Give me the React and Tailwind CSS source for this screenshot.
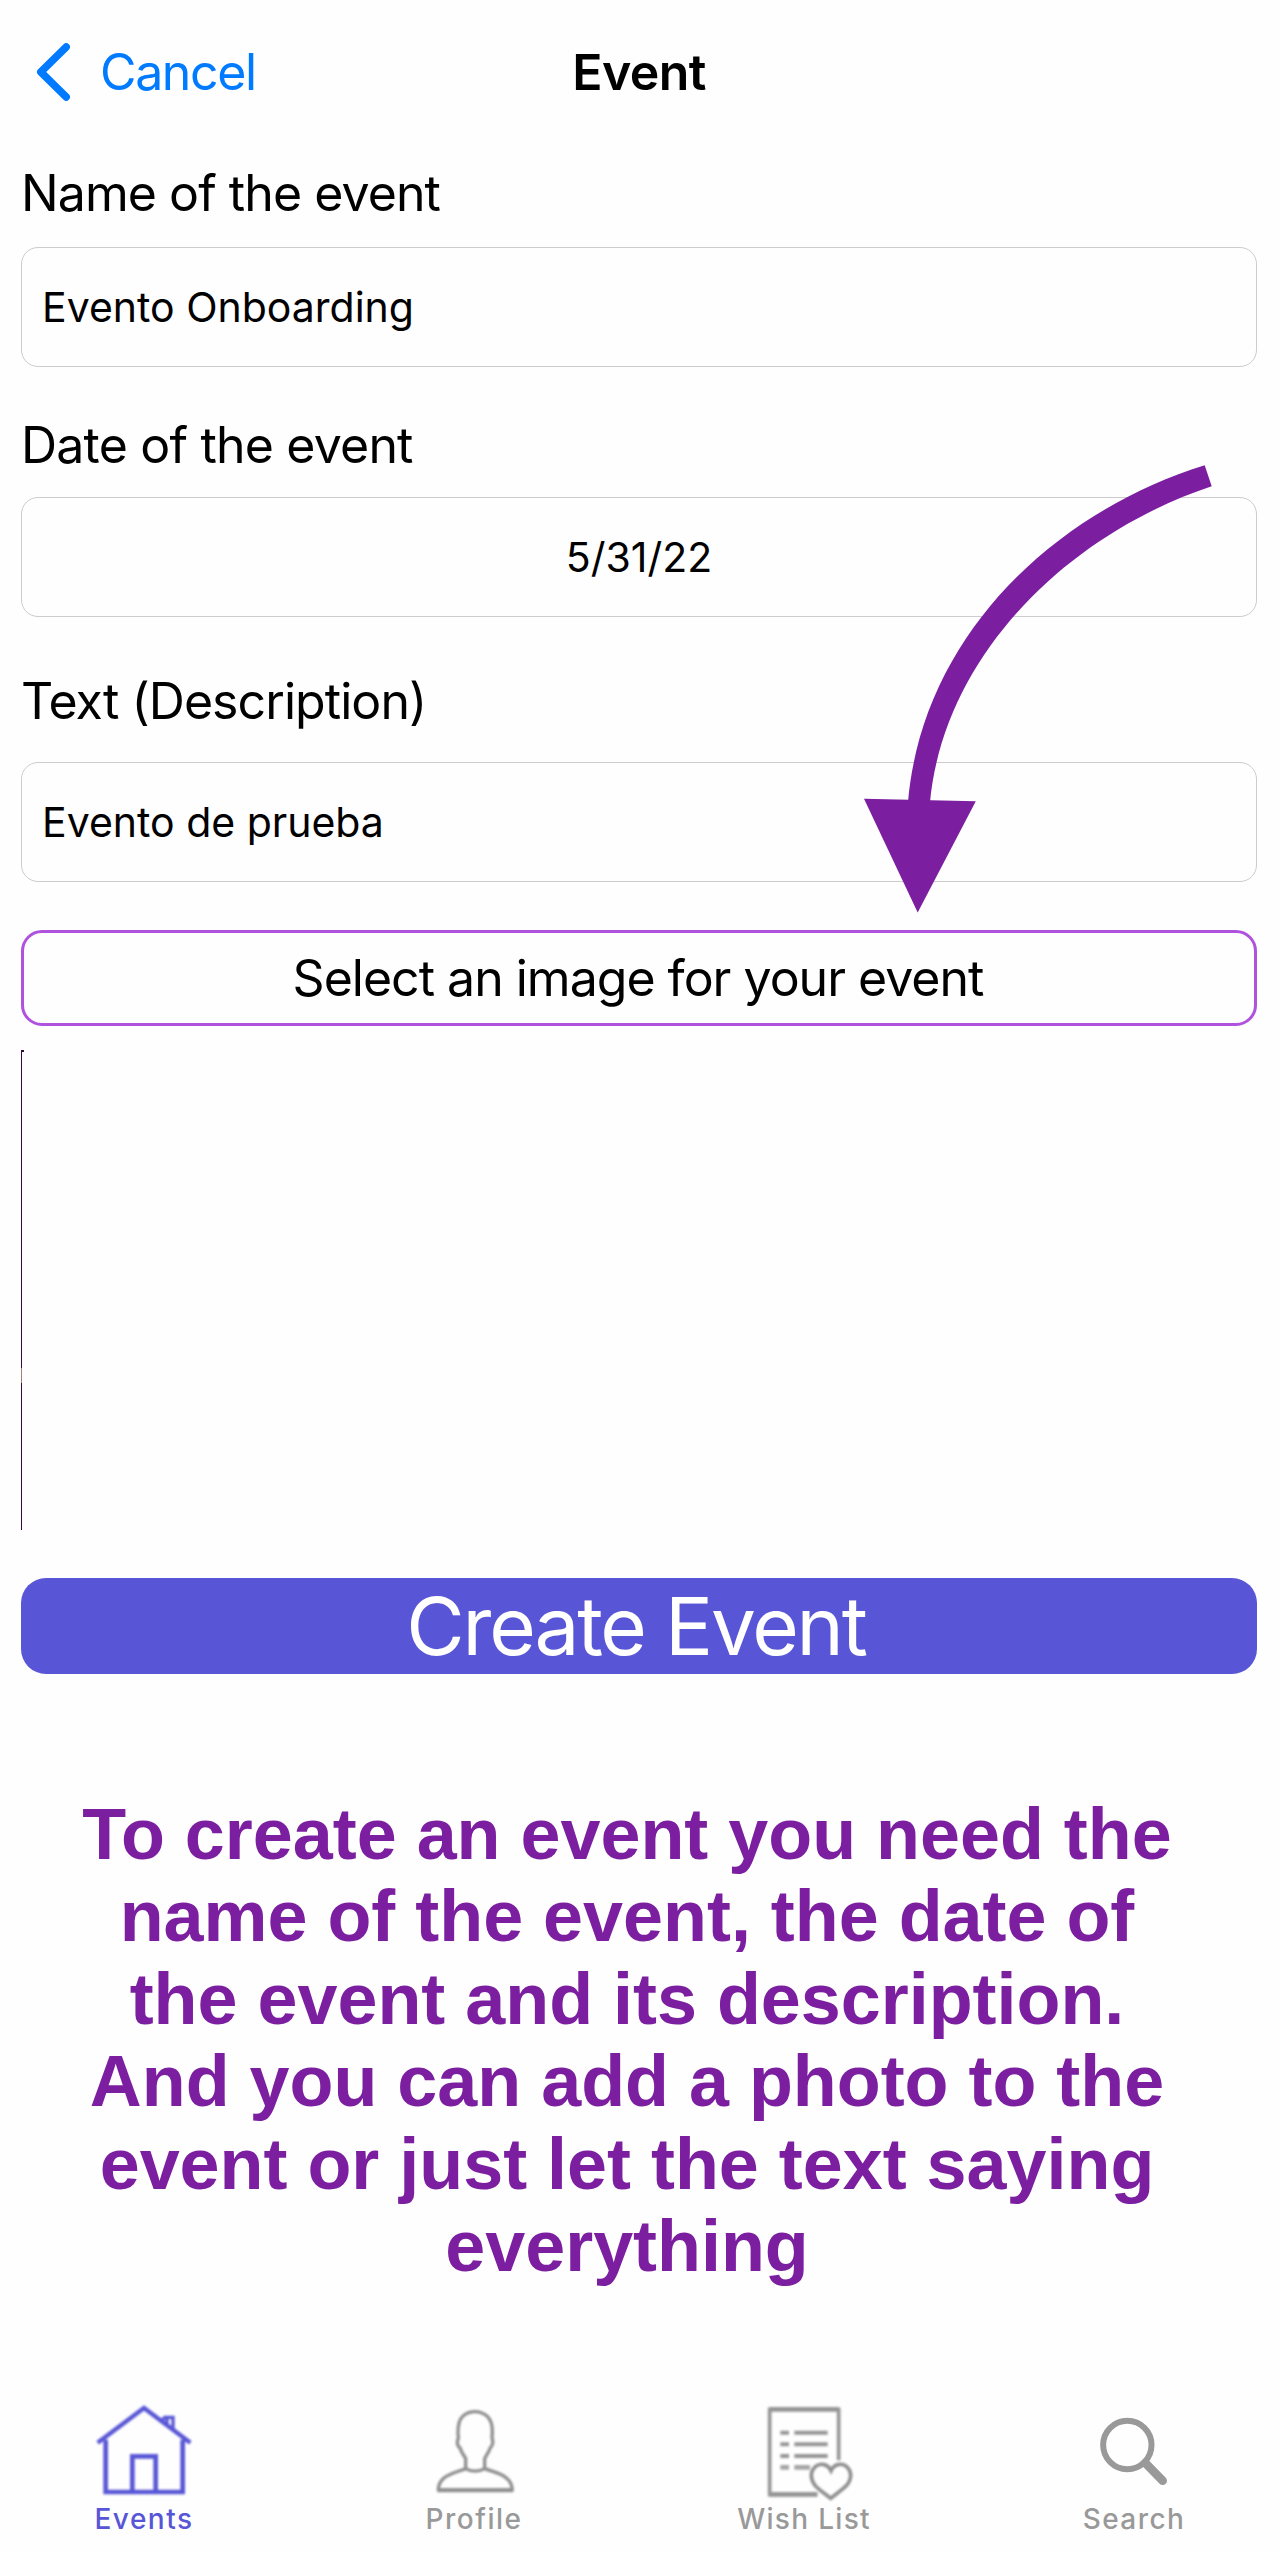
function HouseIcon() {
  return (
    <svg viewBox="12 24 360 312" className="h-[104px] w-[120px] blur-[0.9px]" fill="none" stroke="#5856d6" strokeWidth="14">
      <path d="M53 155 L192 51 L331 155" strokeWidth="13" />
      <path d="M77 146 V303 H308 V146" />
      <path d="M157 300 V196 H227 V300" />
      <path d="M244 90 L254 79 H279 V114 M261 84 V102" strokeWidth="10" />
    </svg>
  );
}

function PersonIcon() {
  return (
    <svg viewBox="42 24 360 312" className="h-[104px] w-[120px] blur-[0.9px]" fill="none" stroke="#8f8f8f" strokeWidth="10" strokeLinejoin="round">
      <path d="M197 233 V202 C191 192 183 184 180 170 C172 166 171 156 173 146 C177 143 175 138 174 128 C173 100 178 84 190 74 C200 66 211 62 225 62 C240 62 251 67 261 75 C273 86 278 100 277 126 C276 138 275 143 278 147 C279 158 277 166 271 170 C267 184 259 192 254 203 V233" />
      <path d="M197 233 C213 243 237 243 254 233 C280 243 304 246 320 262 C332 272 336 282 337 297 H115 C115 282 120 272 131 262 C148 247 172 243 197 233 Z" />
      <path d="M113 298 H339" strokeWidth="12" />
    </svg>
  );
}

function WishIcon() {
  return (
    <svg viewBox="72 24 360 312" className="h-[104px] w-[120px] blur-[0.9px]" fill="none" stroke="#969696" strokeWidth="11">
      <path d="M292 311 H149 V55 H356 V208" />
      <path d="M149 55 H356 M292 310 H149" strokeWidth="14" />
      <path d="M181 125 H207 M223 125 H323 M181 160 H207 M223 160 H323 M181 195 H207 M223 195 H323" strokeWidth="12" />
      <path d="M181 229 H207 M223 229 H270" strokeWidth="14" stroke="#a6a6a6" />
      <path d="M333 239 C324 220 302 214 287 226 C269 241 271 266 285 283 C296 296 320 312 332 322 C344 312 368 296 380 283 C395 266 397 241 379 226 C363 214 342 220 333 239 Z" stroke="#8f8f8f" />
    </svg>
  );
}

function SearchIcon() {
  return (
    <svg viewBox="42 24 360 312" className="h-[104px] w-[120px]" fill="none" stroke="#999999">
      <circle cx="202" cy="162" r="72.5" strokeWidth="18" />
      <path d="M256 216 L308 269" strokeWidth="26" strokeLinecap="round" />
    </svg>
  );
}

function Field({ label, value, className, labelClass, centered }) {
  return (
    <div className={className}>
      <div className={"text-[50px] leading-[60px] whitespace-nowrap " + labelClass}>{label}</div>
      <div
        className={
          "flex h-[120px] items-center rounded-[17px] border border-[#cccccc] text-[41px] leading-none " +
          (centered ? "justify-center" : "pl-[20px]")
        }
      >
        {value}
      </div>
    </div>
  );
}

const tips = [
  "To create an event you need the",
  "name of the event, the date of",
  "the event and its description.",
  "And you can add a photo to the",
  "event or just let the text saying",
  "everything",
];

const tabs = [
  { name: "Events", Icon: HouseIcon, style: "text-[#5856d6] tracking-[1.5px]" },
  { name: "Profile", Icon: PersonIcon, style: "text-[#999999] tracking-[1.5px]" },
  { name: "Wish List", Icon: WishIcon, style: "text-[#999999] tracking-[1.3px]" },
  { name: "Search", Icon: SearchIcon, style: "text-[#999999] tracking-[1.45px]" },
];

export default function App() {
  return (
    <div className="relative flex h-[2551px] w-[1281px] flex-col overflow-hidden bg-[#fefefe] font-['Inter',sans-serif] text-black">
      <header className="grid h-[144px] grid-cols-[1fr_auto_1fr] items-center text-[50px] leading-[60px]">
        <div className="flex items-center text-[#007aff]">
          <svg viewBox="0 0 40 64" className="ml-[34px] h-[64px] w-[40px]" fill="none" stroke="#007aff" strokeWidth="7.5" strokeLinecap="round" strokeLinejoin="round">
            <path d="M32.2 7 L6.8 32 L32.2 57" />
          </svg>
          <span className="ml-[26px] tracking-[-1.37px]">Cancel</span>
        </div>
        <h1 className="pr-[3px] font-semibold tracking-[-0.6px]">Event</h1>
        <div />
      </header>

      <main className="flex flex-col pr-[24px] pl-[21px]">
        <Field className="mt-[19px] flex flex-col gap-[24px]" label="Name of the event" labelClass="tracking-[-0.93px]" value="Evento Onboarding" />
        <Field className="mt-[48px] flex flex-col gap-[22px]" label="Date of the event" labelClass="tracking-[-0.8px]" value="5/31/22" centered />
        <Field className="mt-[54px] flex flex-col gap-[31px]" label="Text (Description)" labelClass="tracking-[-0.93px]" value="Evento de prueba" />

        <button className="mt-[48px] flex h-[96px] items-center justify-center rounded-[21px] border-[3px] border-[#af52de] pr-[2px] text-[50px] leading-[60px] tracking-[-1px]">
          Select an image for your event
        </button>

        <div className="mt-[24px] flex h-[480px] items-start">
          <div className="flex h-full w-px flex-col">
            <div className="h-[318px] bg-[#3b0540]" />
            <div className="h-[15px] bg-[#a58276]" />
            <div className="flex-1 bg-[#3b0540]" />
          </div>
          <div className="h-[2px] w-[2px] bg-[#3b0540]" />
        </div>

        <button className="mt-[48px] flex h-[96px] items-center justify-center rounded-[25px] bg-[#5856d6] pr-[6px] text-[80px] leading-[96px] tracking-[-2.2px] text-white">
          Create Event
        </button>
      </main>

      <p className="mt-[119px] w-[1254px] text-center font-['Liberation_Sans',sans-serif] text-[71.9px] leading-[82.4px] font-bold text-[#7b1fa0]">
        {tips.map((line) => (
          <span key={line} className="block whitespace-nowrap">
            {line}
          </span>
        ))}
      </p>

      <nav className="mt-auto mb-[16px] flex justify-between pr-[47px] pl-[44px]">
        {tabs.map(({ name, Icon, style }) => (
          <div key={name} className="flex w-[200px] flex-col items-center">
            <Icon />
            <span className={"text-[28px] leading-[32px] font-medium whitespace-nowrap " + style}>{name}</span>
          </div>
        ))}
      </nav>

      <svg viewBox="850 455 380 465" className="pointer-events-none absolute top-[455px] left-[850px] h-[465px] w-[380px]" fill="#7b1fa0">
        <path d="M1204.7 465.3 C1049 514 922 640 908 802 H930 C944 655 1068 534 1211.7 486.3 Z" />
        <path d="M864 798.8 L975.8 801.3 L917.7 912.5 Z" />
      </svg>
    </div>
  );
}
